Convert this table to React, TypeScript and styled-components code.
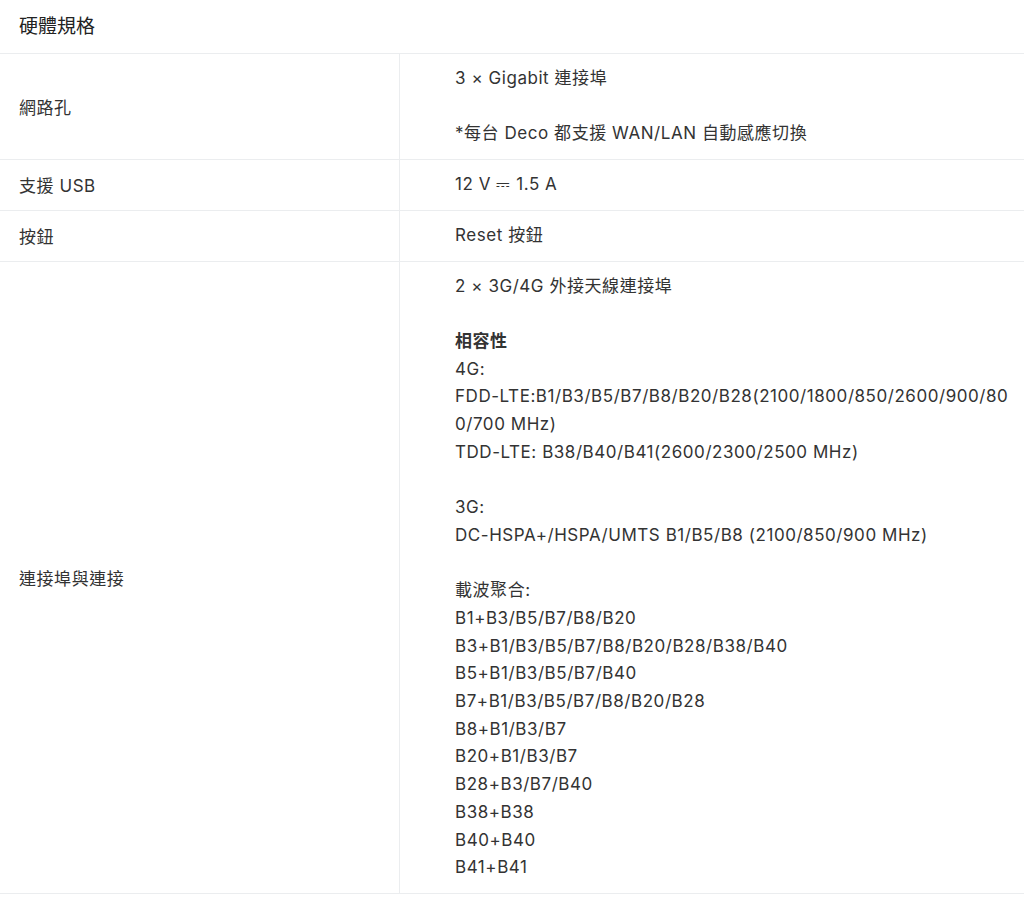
import React from "react";
import styled, { createGlobalStyle } from "styled-components";

const GlobalStyle = createGlobalStyle`
  body {
    margin: 0;
    background: #fff;
    font-family: Inter, "Noto Sans CJK TC", sans-serif;
    color: #333;
  }
`;

const Section = styled.div`
  width: 1024px;
`;

const Title = styled.div`
  height: 53px;
  line-height: 54px;
  padding: 0 19px;
  font-size: 19px;
  color: #222;
  border-bottom: 1px solid #ebedef;
`;

const Table = styled.div`
  display: flex;
  flex-direction: column;
`;

const Row = styled.div`
  display: grid;
  grid-template-columns: 400px 1fr;
  border-bottom: 1px solid #ebedef;
  font-size: 17px;
  letter-spacing: 0.55px;
`;

const Label = styled.div`
  display: flex;
  align-items: center;
  padding: 0 19px;
  border-right: 1px solid #ebedef;
`;

const Value = styled.div`
  padding: 11px 12px 11px 55px;
  word-break: break-all;
`;

const Line = styled.div`
  line-height: 27.7px;
  min-height: 27.7px;
`;

const Strong = styled.span`
  font-weight: 700;
`;

interface SpecRow {
  label: string;
  lines: React.ReactNode[];
}

const rows: SpecRow[] = [
  {
    label: "網路孔",
    lines: ["3 × Gigabit 連接埠", "", "*每台 Deco 都支援 WAN/LAN 自動感應切換"],
  },
  { label: "支援 USB", lines: ["12 V ⎓ 1.5 A"] },
  { label: "按鈕", lines: ["Reset 按鈕"] },
  {
    label: "連接埠與連接",
    lines: [
      "2 × 3G/4G 外接天線連接埠",
      "",
      <Strong key="b">相容性</Strong>,
      "4G:",
      "FDD-LTE:B1/B3/B5/B7/B8/B20/B28(2100/1800/850/2600/900/800/700 MHz)",
      "TDD-LTE: B38/B40/B41(2600/2300/2500 MHz)",
      "",
      "3G:",
      "DC-HSPA+/HSPA/UMTS B1/B5/B8 (2100/850/900 MHz)",
      "",
      "載波聚合:",
      "B1+B3/B5/B7/B8/B20",
      "B3+B1/B3/B5/B7/B8/B20/B28/B38/B40",
      "B5+B1/B3/B5/B7/B40",
      "B7+B1/B3/B5/B7/B8/B20/B28",
      "B8+B1/B3/B7",
      "B20+B1/B3/B7",
      "B28+B3/B7/B40",
      "B38+B38",
      "B40+B40",
      "B41+B41",
    ],
  },
];

export default function App() {
  return (
    <>
      <GlobalStyle />
      <Section>
        <Title>硬體規格</Title>
        <Table>
          {rows.map((row) => (
            <Row key={row.label}>
              <Label>{row.label}</Label>
              <Value>
                {row.lines.map((line, i) => (
                  <Line key={i}>{line === "" ? "\u00a0" : line}</Line>
                ))}
              </Value>
            </Row>
          ))}
        </Table>
      </Section>
    </>
  );
}
